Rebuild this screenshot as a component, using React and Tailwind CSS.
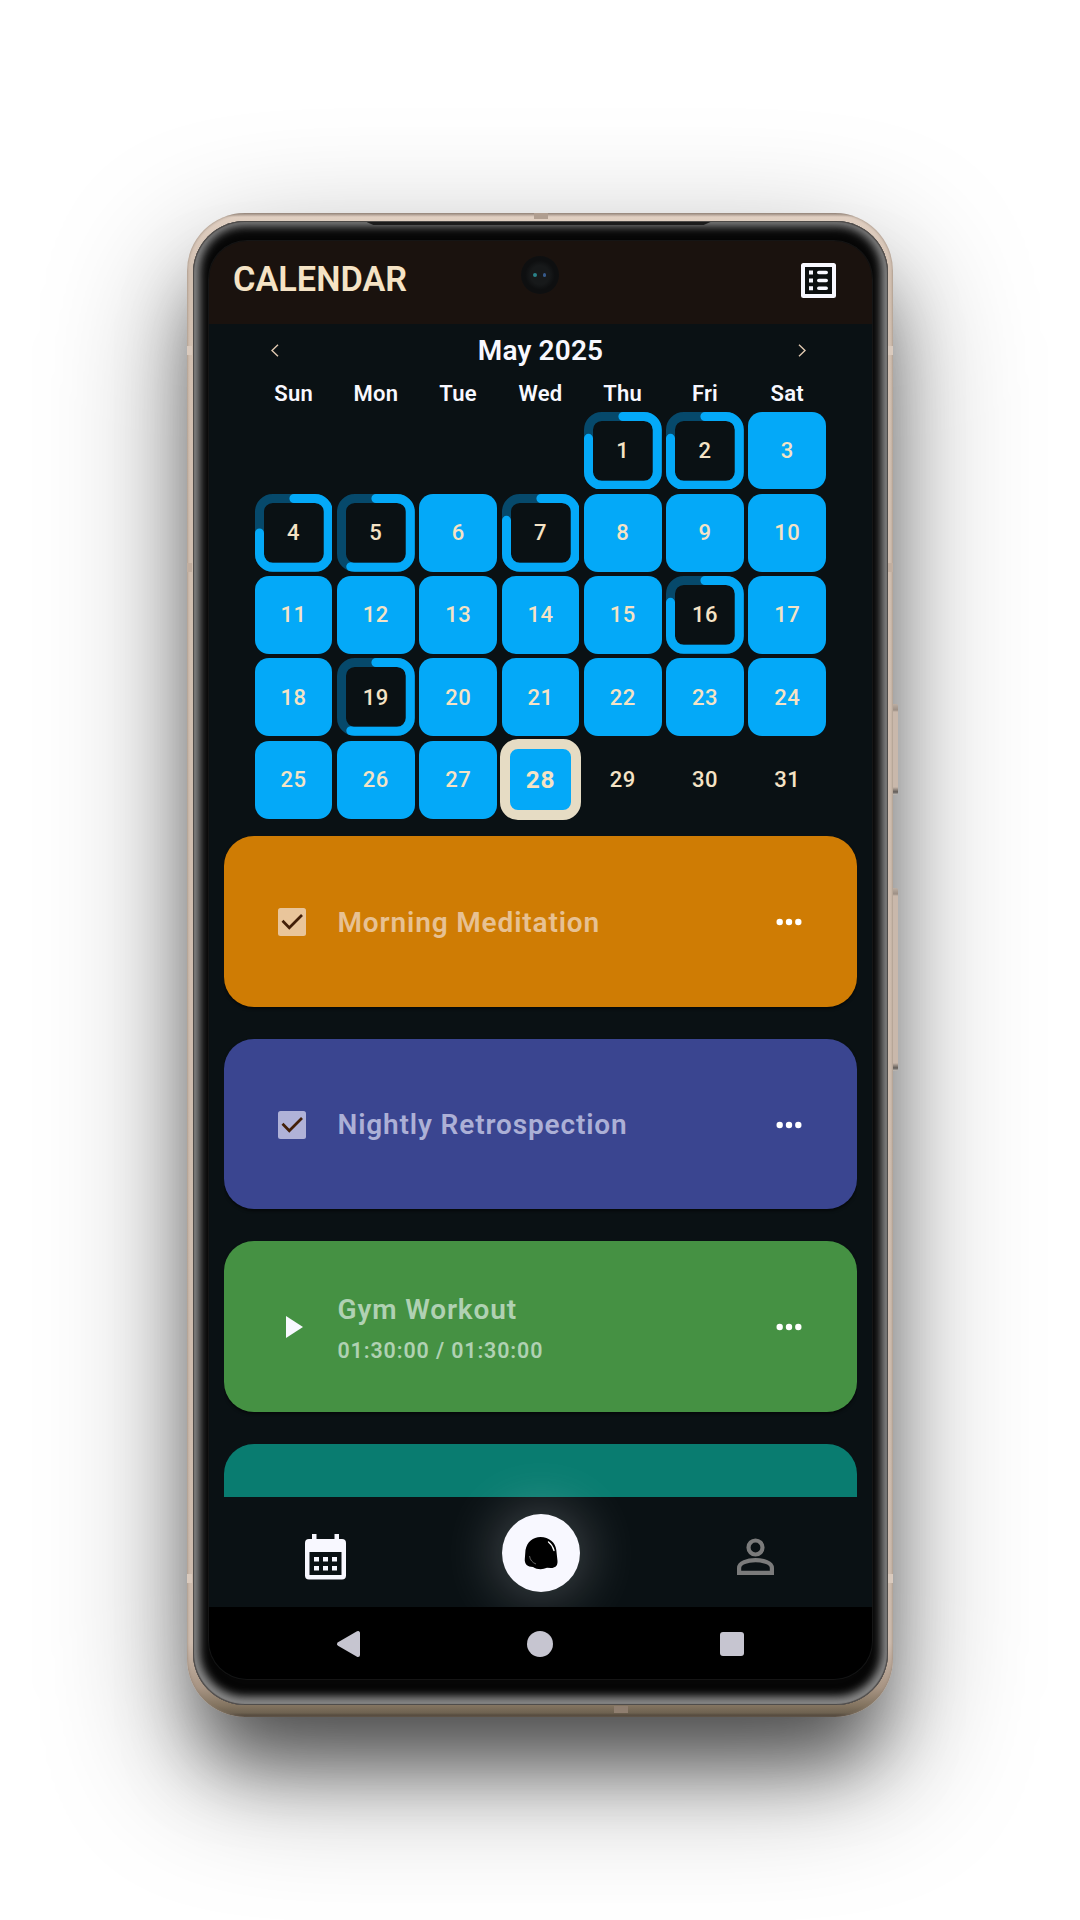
import React from "react";

const ring = { 1: 80, 2: 80, 4: 75, 5: 60, 7: 80, 16: 80, 19: 60 };

const RING_PATH =
  "M38.9 4.5H60A13.3 13.3 0 0 1 73.3 17.8V60A13.3 13.3 0 0 1 60 73.3H17.8A13.3 13.3 0 0 1 4.5 60V17.8A13.3 13.3 0 0 1 17.8 4.5Z";

function Ring({ value }) {
  return (
    <svg className="absolute inset-0 size-full" viewBox="0 0 77.8 77.8" fill="none" strokeWidth="9">
      <path d={RING_PATH} stroke="#06496b" />
      <path d={RING_PATH} stroke="#04a9f8" pathLength="100" strokeDasharray={`${value} 200`} strokeLinecap="round" />
    </svg>
  );
}

function Day({ n }) {
  if (n < 1) return <div />;
  if (n === 28)
    return (
      <div className="-m-[1.6px] flex items-center justify-center rounded-[18px] border-[10px] border-[#e6dcc4] bg-[#04a9f8] pt-px text-[24.5px] font-bold">
        28
      </div>
    );
  if (n in ring)
    return (
      <div className="relative flex items-center justify-center">
        <Ring value={ring[n]} />
        <span>{n}</span>
      </div>
    );
  if (n > 28) return <div className="flex items-center justify-center">{n}</div>;
  return <div className="flex items-center justify-center rounded-[14px] bg-[#04a9f8]">{n}</div>;
}

function Dots() {
  return (
    <svg className="mr-[55px]" width="26" height="8" viewBox="0 0 26 8" fill="#fff">
      <circle cx="3.7" cy="4" r="3.2" />
      <circle cx="13" cy="4" r="3.2" />
      <circle cx="22.3" cy="4" r="3.2" />
    </svg>
  );
}

function Task({ title, time, color, text, box }) {
  return (
    <div className={`flex h-[170.5px] shrink-0 items-center rounded-[30px] pt-[1.5px] shadow-[0_2px_3px_#0008] ${color}`}>
      <div className="ml-[54px] flex w-[60px] items-center">
        {time ? (
          <svg className="ml-[8px]" width="17" height="22" viewBox="0 0 17 22"><path d="M0 0L17 11L0 22Z" fill="#f8f8ff" /></svg>
        ) : (
          <svg width="28" height="28" viewBox="0 0 28 28">
            <rect width="28" height="28" rx="2.5" className={box} />
            <path d="M4.5 12.8L11.3 19.8L24 7" fill="none" stroke="#431f08" strokeWidth="2.7" />
          </svg>
        )}
      </div>
      <div className={`flex-1 pt-px font-semibold ${text}`}>
        <div className="text-[28px] leading-[34px] tracking-[0.86px]">{title}</div>
        {time && <div className="mt-[12px] text-[21.4px] leading-[24px] tracking-[0.9px]">{time}</div>}
      </div>
      <Dots />
    </div>
  );
}

function Header() {
  return (
    <header className="relative flex h-[83px] shrink-0 items-start justify-between bg-[#1a120e] pr-[36px] pl-[24.5px]">
      <h1 className="mt-[17px] text-[34.3px] leading-[42px] font-semibold text-[#f5e3c5]">CALENDAR</h1>
      <svg className="mt-[22px]" width="35" height="35" viewBox="0 0 35 35">
        <rect x="2" y="2" width="31" height="31" rx=".5" fill="#0c0f10" stroke="#f8f8ff" strokeWidth="4" />
        <path d="M8 9.5h4M8 17.5h4M8 25.3h4" stroke="#f8f8ff" strokeWidth="4" />
        <path d="M17.8 9.5h7.4M17.8 17.5h7.4M17.8 25.3h7.4" stroke="#f8f8ff" strokeWidth="3.6" strokeLinecap="round" />
      </svg>
      <div className="absolute top-[15px] left-[312px] flex size-[38px] items-center justify-center gap-[6px] rounded-full bg-[radial-gradient(circle,#17191a_35%,#0e0f10_55%)]">
        <i className="size-[3.5px] rounded-full bg-[#2a8288] blur-[0.5px]" />
        <i className="size-[3.5px] rounded-full bg-[#36598a] blur-[0.5px]" />
      </div>
    </header>
  );
}

function BottomNav() {
  return (
    <nav className="relative flex h-[110px] shrink-0 items-center justify-between pr-[98px] pl-[96px]">
      <svg className="mt-[10px]" width="41" height="46" viewBox="0 0 41 46">
        <path fill="#f8f8ff" fillRule="evenodd" d="M7 0h4.500v5h18V0H34v5h3a4 4 0 0 1 4 4v32.500a4 4 0 0 1-4 4H4a4 4 0 0 1-4-4V9a4 4 0 0 1 4-4h3ZM4.500 18v23h32V18Z" />
        <path stroke="#f8f8ff" strokeWidth="4.600" strokeDasharray="5 4" d="M9 25.200h23M9 34.300h23" />
      </svg>
      <div className="absolute top-[16.500px] left-[293px] flex size-[78px] items-center justify-center rounded-full bg-[#f8f8ff] shadow-[0_0_58px_4px_#f8f8ff48]">
        <svg width="34" height="34" viewBox="0 0 34 34">
          <path d="M1.500 14C3 6 9 1 16.500 1C25 1 31.500 6.500 32.300 14L33.500 25C33.800 30 31 32 27 32L23 31.800C18 34 13 33.500 9 31C3.500 31 .3 28 .8 23Z" fill="#000" />
          <path d="M24.500 6Q28.500 9 30 14.500" fill="none" stroke="#fff" strokeWidth="1.300" strokeLinecap="round" />
          <path d="M5.500 20Q6.500 26 12 28" fill="none" stroke="#aaa" strokeWidth=".6" />
        </svg>
      </div>
      <svg className="mt-[9px]" width="37" height="37" viewBox="0 0 37 37" fill="none" stroke="#7b7b7b" strokeWidth="4.200">
        <circle cx="18.500" cy="9.500" r="7" />
        <path d="M2.100 34.800V30C2.100 19.600 34.900 19.600 34.900 30V34.800Z" />
      </svg>
    </nav>
  );
}

function SystemBar() {
  return (
    <div className="relative flex h-[72px] shrink-0 items-center justify-between bg-black pr-[127.500px] pl-[127px]">
      <svg className="mt-[2px]" width="25" height="28" viewBox="0 0 25 28">
        <path d="M3 14L22 3V25Z" fill="#c6c5d0" stroke="#c6c5d0" strokeWidth="4" strokeLinejoin="round" />
      </svg>
      <i className="mt-[2px] size-[26px] rounded-full bg-[#c6c5d0]" />
      <i className="mt-[2px] size-[24px] rounded-[3px] bg-[#c6c5d0]" />
    </div>
  );
}

export default function App() {
  const days = Array.from({ length: 35 }, (_, i) => i - 3);
  return (
    <div className="flex h-[1920px] w-[1080px] items-start overflow-hidden bg-white pt-[213px] pl-[187px] font-['Roboto',sans-serif]">
      <div className="relative h-[1504px] w-[706px] rounded-[58px] bg-[linear-gradient(to_bottom,#9b8c82_0px,#e0cfc1_4px,#d2c0b1_60px,#cdbbad_1430px,#a79483_1475px,#82735f_1493px,#6d6150_1500px,#3f362c_1504px)] px-[5.500px] pt-[8px] shadow-[0_60px_75px_-16px_#0008,0_50px_140px_#0006,inset_0_0_3px_#8b7c70]">
        <div className="absolute top-[491px] -right-[5px] h-[91px] w-[5px] rounded-r-[2px] bg-[linear-gradient(#bcaea2,#9c8f85_6px,#c9b8ab_8px,#c9b8ab_83px,#5f5a56_88px,#c9c4bf)]" />
        <div className="absolute top-[675px] -right-[5px] h-[183px] w-[5px] rounded-r-[2px] bg-[linear-gradient(#bcaea2,#9c8f85_6px,#c9b8ab_8px,#c9b8ab_175px,#5f5a56_180px,#c9c4bf)]" />
        <i className="absolute top-0 left-[347px] h-[6px] w-[14px] bg-[#b09e90]" />
        <i className="absolute bottom-[4px] left-[427px] h-[7px] w-[14px] bg-[#8f7e6f]" />
        <i className="absolute top-[133px] left-0 h-[9px] w-[5px] bg-[#dacabd]" />
        <i className="absolute top-[133px] right-0 h-[9px] w-[5px] bg-[#dacabd]" />
        <i className="absolute top-[350px] left-0 h-[9px] w-[5px] bg-[#c1ae9f]" />
        <i className="absolute top-[350px] right-0 h-[9px] w-[5px] bg-[#c1ae9f]" />
        <i className="absolute top-[1361px] left-0 h-[9px] w-[5px] bg-[#dacabd]" />
        <i className="absolute top-[1361px] right-0 h-[9px] w-[5px] bg-[#dacabd]" />
        <div className="relative h-[1484px] rounded-[52px] bg-[#060606] px-[16px] pt-[20px] shadow-[inset_0_0_1px_1px_#4a4644,inset_0_-2px_9px_6px_#8b8b8b,inset_0_0_12px_7px_#2b2b2b]">
          <div className="absolute top-px left-[174px] h-[3px] w-[344px] bg-[#1c1c1c] [clip-path:polygon(0_0,100%_0,98%_100%,2%_100%)]" />
          <div className="flex h-[1438px] w-[663px] flex-col overflow-hidden rounded-[38px] bg-[#0a1114] shadow-[0_0_0_1px_#151515]">
            <Header />
            <div className="flex h-[52px] shrink-0 items-center justify-between pr-[65.500px] pl-[62.500px] text-[#f8f8ff]">
              <svg width="8" height="13" viewBox="0 0 8 13" fill="none" stroke="#e0c8b0" strokeWidth="1.400"><path d="M7 .7L1 6.500L7 12.300" /></svg>
              <h2 className="ml-[4px] pt-px text-[28px] leading-[34px] font-semibold tracking-[0.150px]">May 2025</h2>
              <svg width="8" height="13" viewBox="0 0 8 13" fill="none" stroke="#e0c8b0" strokeWidth="1.400"><path d="M1 .7L7 6.500L1 12.300" /></svg>
            </div>
            <div className="ml-[46.200px] grid h-[35.500px] w-[571.500px] shrink-0 grid-cols-7 gap-[4.500px] pt-px text-center text-[22px] leading-[34px] font-semibold tracking-[0.250px] text-[#f8f8ff]">
              {["Sun", "Mon", "Tue", "Wed", "Thu", "Fri", "Sat"].map((d) => <div key={d}>{d}</div>)}
            </div>
            <div className="ml-[46.200px] grid h-[407px] w-[571.500px] shrink-0 grid-cols-7 grid-rows-5 gap-[4.500px] text-[22px] font-medium tracking-[0.500px] text-[#f5e3c5]">
              {days.map((n) => <Day key={n} n={n} />)}
            </div>
            <main className="mt-[17.500px] ml-[15px] flex min-h-0 w-[633.500px] flex-1 flex-col gap-[32px] overflow-hidden">
              <Task title="Morning Meditation" color="bg-[#cf7c04]" text="text-[#e7c193]" box="fill-[#e9c59b]" />
              <Task title="Nightly Retrospection" color="bg-[#3a4590]" text="text-[#acb0d6]" box="fill-[#b0b2d8]" />
              <Task title="Gym Workout" time="01:30:00 / 01:30:00" color="bg-[#459143]" text="text-[#b0d1b3]" />
              <div className="h-[170.500px] shrink-0 rounded-[30px] bg-[#097c70]" />
            </main>
            <BottomNav />
            <SystemBar />
          </div>
        </div>
      </div>
    </div>
  );
}
